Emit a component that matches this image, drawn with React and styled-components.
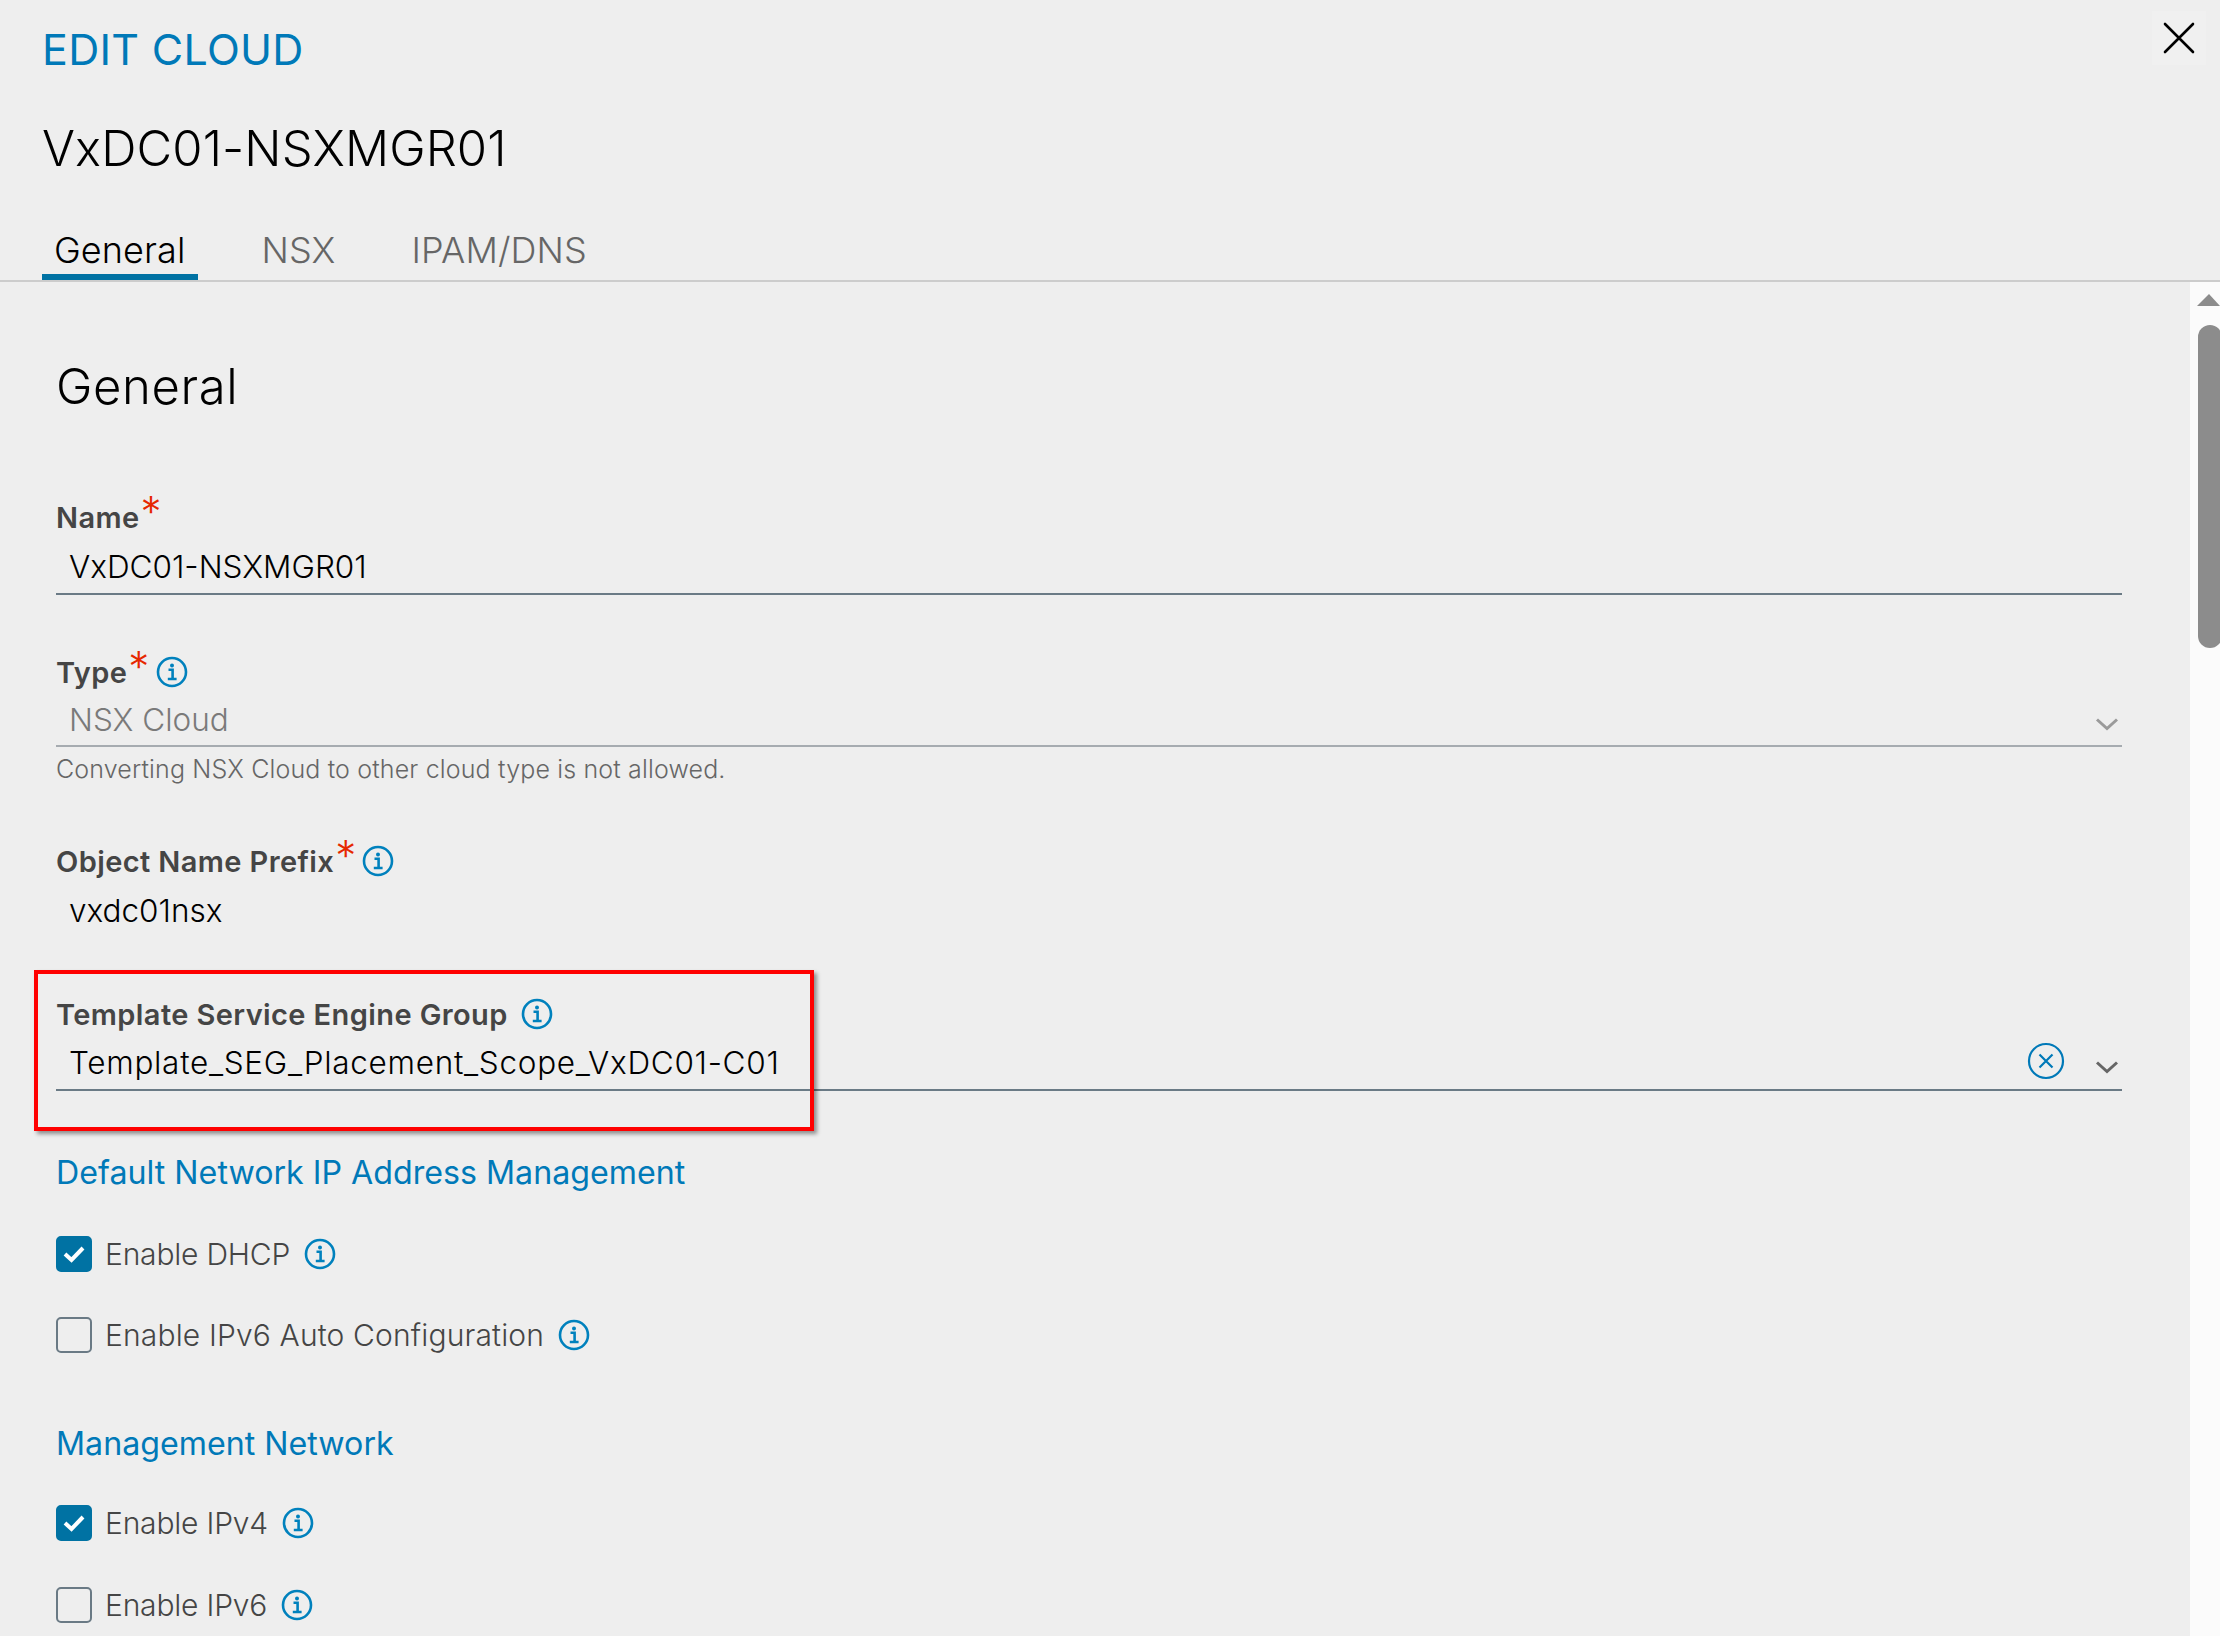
import React from 'react'
import styled, { createGlobalStyle } from 'styled-components'

const GlobalStyle = createGlobalStyle`
    html, body {
        margin: 0;
        padding: 0;
        height: 100%;
        background-color: #eeeeee;
        font-family: 'Inter', 'Liberation Sans', sans-serif;
    }
`

const Page = styled.div`
    width: 2220px;
    height: 1636px;
    overflow: hidden;
    position: relative;
    display: flex;
    flex-direction: column;
`

const Header = styled.header`
    height: 280px;
    flex: none;
    padding-left: 42px;
    border-bottom: 2px solid #cccccc;
    display: flex;
    flex-direction: column;
`

const Eyebrow = styled.h2`
    margin: 29px 0 0;
    font-size: 43px;
    line-height: 40px;
    font-weight: 400;
    letter-spacing: .3px;
    color: #0079b8;
`

const CloudName = styled.h1`
    margin: 50px 0 0;
    font-size: 49px;
    line-height: 60px;
    font-weight: 300;
    letter-spacing: .1px;
    color: #000000;
`

const Tabs = styled.nav`
    margin-top: 43px;
    display: flex;
    gap: 52px;
`

const Tab = styled.div`
    height: 52px;
    padding: 0 12px;
    font-size: 36px;
    line-height: 56px;
    font-weight: 300;
    letter-spacing: .1px;
    color: ${(props) => props.active ? '#000000' : '#666666'};
    border-bottom: 6px solid ${(props) => props.active ? '#0072a3' : 'transparent'};
`

const Close = styled.button`
    position: absolute;
    top: 11px;
    right: 14px;
    width: 54px;
    height: 54px;
    padding: 0;
    border: none;
    background-color: #f0f0f0;
    display: grid;
    place-content: center;
`

const Body = styled.div`
    flex: 1;
    min-height: 0;
    display: flex;
`

const Content = styled.main`
    flex: 1;
    padding: 76px 68px 0 56px;
`

const Heading = styled.h3`
    margin: 0 0 81px;
    font-size: 49px;
    line-height: 58px;
    font-weight: 300;
    letter-spacing: .6px;
    color: #000000;
`

const Field = styled.section`
    position: relative;
    margin-bottom: ${(props) => props.gap || 57}px;
`

const Label = styled.div`
    height: 40px;
    display: flex;
    align-items: center;
    font-size: 29px;
    font-weight: 600;
    letter-spacing: .4px;
    color: #454545;
`

const Star = styled.span`
    align-self: flex-start;
    margin-top: -5px;
    margin-left: 1px;
    font-size: 42px;
    line-height: 40px;
    font-weight: 300;
    color: #e62700;
`

const Value = styled.div`
    margin-top: 2px;
    height: ${(props) => props.rowHeight || 54}px;
    padding-left: 13px;
    display: flex;
    align-items: center;
    font-size: 31.5px;
    font-weight: 300;
    letter-spacing: ${(props) => props.spacing || 0}px;
    color: ${(props) => props.disabled ? '#7a7a7a' : '#000000'};
    border-bottom: 2px solid ${(props) => props.plain ? 'transparent' : props.disabled ? '#a6abb0' : '#6a7a85'};
`

const ValueText = styled.span`
    flex: 1;
`

const Help = styled.div`
    margin-top: 7px;
    font-size: 25px;
    line-height: 30px;
    font-weight: 300;
    letter-spacing: .15px;
    color: #666666;
`

const Highlight = styled.div`
    position: absolute;
    left: -22px;
    top: -24px;
    width: 780px;
    height: 161px;
    box-sizing: border-box;
    border: 4px solid #ff0000;
    box-shadow: 3px 3px 4px rgba(0, 0, 0, .4);
    pointer-events: none;
`

const SectionTitle = styled.h4`
    margin: 0 0 ${(props) => props.gap || 41}px;
    font-size: 32.2px;
    line-height: 40px;
    font-weight: 400;
    color: #0079b8;
`

const CheckRow = styled.div`
    height: 40px;
    margin-bottom: ${(props) => props.gap || 41}px;
    display: flex;
    align-items: center;
    font-size: 30px;
    font-weight: 300;
    letter-spacing: ${(props) => props.spacing || 0}px;
    color: #454545;
`

const Box = styled.span`
    width: 36px;
    height: 36px;
    flex: none;
    box-sizing: border-box;
    margin-right: 13px;
    border-radius: 5px;
    border: 2px solid ${(props) => props.checked ? '#0072a3' : '#6a7a85'};
    background-color: ${(props) => props.checked ? '#0072a3' : 'transparent'};
    display: grid;
    place-content: center;
`

const Track = styled.aside`
    width: 30px;
    flex: none;
    background-color: #fbfbfb;
    padding: 12px 0 0 8px;
    box-sizing: border-box;
    overflow: hidden;
`

const ArrowUp = styled.div`
    width: 0;
    height: 0;
    margin-left: -1px;
    border-left: 12px solid transparent;
    border-right: 11px solid transparent;
    border-bottom: 12px solid #8c8c8c;
`

const Thumb = styled.div`
    margin-top: 19px;
    width: 24px;
    height: 323px;
    background-color: #8c8c8c;
    border-radius: 12px;
`

const Info = ({ ml = 6 }) => (
    <svg width="32" height="32" viewBox="0 0 32 32" style={{ marginLeft: ml, flex: 'none' }}>
        <circle cx="16" cy="16" r="14" fill="none" stroke="#0081bd" strokeWidth="2.6" />
        <circle cx="16" cy="9.5" r="2" fill="#0081bd" />
        <path d="M12.5 13.8H16.6V22.6M11.8 23H20.6" fill="none" stroke="#0081bd" strokeWidth="2.6" />
    </svg>
)

const Chevron = ({ color = '#666666' }) => (
    <svg width="24" height="14" viewBox="0 0 24 14" style={{ marginRight: 3, marginTop: 8 }}>
        <path d="M2 2.5L12 11.5L22 2.5" fill="none" stroke={color} strokeWidth="3" />
    </svg>
)

const ClearIcon = () => (
    <svg width="38" height="38" viewBox="0 0 38 38" style={{ marginRight: 30, marginTop: -3 }}>
        <circle cx="19" cy="19" r="17" fill="none" stroke="#0079b8" strokeWidth="2.2" />
        <path d="M12.5 12.5L25.5 25.5M25.5 12.5L12.5 25.5" stroke="#0079b8" strokeWidth="2.2" />
    </svg>
)

const Check = () => (
    <svg width="22" height="18" viewBox="0 0 22 18">
        <path d="M2 9L8.5 15L20 3" fill="none" stroke="#ffffff" strokeWidth="4" />
    </svg>
)

const CheckField = ({ checked, label, gap, spacing }) => (
    <CheckRow gap={gap} spacing={spacing}>
        <Box checked={checked}>{checked && <Check />}</Box>
        {label}
        <Info ml={14} />
    </CheckRow>
)

const App = () => {
    return (
        <Page>
            <GlobalStyle />
            <Header>
                <Eyebrow>EDIT CLOUD</Eyebrow>
                <CloudName>VxDC01-NSXMGR01</CloudName>
                <Tabs>
                    <Tab active>General</Tab>
                    <Tab>NSX</Tab>
                    <Tab>IPAM/DNS</Tab>
                </Tabs>
            </Header>
            <Close>
                <svg width="32" height="32" viewBox="0 0 32 32">
                    <path d="M2 2L30 30M30 2L2 30" stroke="#000000" strokeWidth="2.6" strokeLinecap="round" />
                </svg>
            </Close>
            <Body>
                <Content>
                    <Heading>General</Heading>
                    <Field>
                        <Label>Name<Star>*</Star></Label>
                        <Value><ValueText>VxDC01-NSXMGR01</ValueText></Value>
                    </Field>
                    <Field>
                        <Label>Type<Star>*</Star><Info /></Label>
                        <Value disabled rowHeight={51}>
                            <ValueText>NSX Cloud</ValueText>
                            <Chevron color="#9a9a9a" />
                        </Value>
                        <Help>Converting NSX Cloud to other cloud type is not allowed.</Help>
                    </Field>
                    <Field gap={55}>
                        <Label>Object Name Prefix<Star>*</Star><Info ml={5} /></Label>
                        <Value plain><ValueText>vxdc01nsx</ValueText></Value>
                    </Field>
                    <Field gap={62}>
                        <Highlight />
                        <Label>Template Service Engine Group<Info ml={13} /></Label>
                        <Value rowHeight={53} spacing={.7}>
                            <ValueText>Template_SEG_Placement_Scope_VxDC01-C01</ValueText>
                            <ClearIcon />
                            <Chevron />
                        </Value>
                    </Field>
                    <SectionTitle>Default Network IP Address Management</SectionTitle>
                    <CheckField checked label="Enable DHCP" spacing={-.2} />
                    <CheckField label="Enable IPv6 Auto Configuration" spacing={.15} gap={69} />
                    <SectionTitle gap={39}>Management Network</SectionTitle>
                    <CheckField checked label="Enable IPv4" spacing={-.2} gap={42} />
                    <CheckField label="Enable IPv6" spacing={-.2} />
                </Content>
                <Track>
                    <ArrowUp />
                    <Thumb />
                </Track>
            </Body>
        </Page>
    )
}

export default App
